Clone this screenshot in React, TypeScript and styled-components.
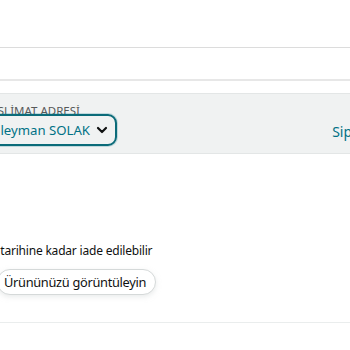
import React from 'react';
import styled, { createGlobalStyle } from 'styled-components';

const teal = '#007185';
const ink = '#0f1111';
const font = "'Noto Sans', 'Open Sans', Arial, sans-serif";

const GlobalStyle = createGlobalStyle`
  html, body {
    margin: 0;
    padding: 0;
    background: #ffffff;
  }
  body {
    font-family: ${font};
    color: ${ink};
  }
`;

const Page = styled.div`
  width: 350px;
  height: 350px;
  overflow: hidden;
  display: flex;
  flex-direction: column;
`;

const Rule = styled.div<{ $top: number; $color: string; $h?: number }>`
  margin-top: ${(p) => p.$top}px;
  height: ${(p) => p.$h || 1}px;
  background: ${(p) => p.$color};
  flex-shrink: 0;
`;

const AddressBar = styled.div`
  margin-top: 12px;
  height: 61px;
  background: #f0f2f2;
  border-top: 1px solid #e3e6e6;
  border-bottom: 1px solid #e3e6e6;
  display: flex;
  align-items: flex-start;
  justify-content: space-between;
  box-sizing: border-box;
  flex-shrink: 0;
`;

const AddressGroup = styled.div`
  margin-left: -17px;
  padding-top: 11px;
  display: flex;
  flex-direction: column;
  align-items: flex-start;
`;

const Label = styled.span`
  font-size: 11.5px;
  line-height: 12px;
  color: #565959;
  padding-left: 2px;
`;

const NameBox = styled.div`
  margin-top: -3px;
  display: inline-flex;
  align-items: center;
  gap: 6px;
  height: 32px;
  box-sizing: border-box;
  padding: 0 7px 0 0;
  border: 2px solid #0b6b79;
  border-radius: 9px;
  box-shadow: 0 0 0 1px rgba(0, 113, 133, 0.2);
`;

const Name = styled.span`
  color: ${teal};
  font-size: 13.2px;
  line-height: 20px;
`;

const OrderLink = styled.span`
  color: ${teal};
  font-size: 14px;
  padding-top: 28px;
  margin-right: -26px;
  white-space: nowrap;
`;

const Body = styled.div`
  margin-top: 88px;
  margin-left: -45px;
  display: flex;
  flex-direction: column;
  align-items: flex-start;
`;

const ReturnText = styled.span`
  font-size: 12px;
  letter-spacing: -0.2px;
  line-height: 18px;
  color: ${ink};
`;

const PillButton = styled.button`
  margin-top: 9px;
  margin-left: 42px;
  height: 26px;
  padding: 0 9px 0 6px;
  border: 1px solid #d5d9d9;
  border-radius: 13px;
  background: #ffffff;
  box-shadow: 0 2px 5px rgba(213, 217, 217, 0.5);
  font-family: ${font};
  font-size: 12.8px;
  letter-spacing: -0.3px;
  color: ${ink};
  white-space: nowrap;
`;

const Chevron = () => (
  <svg width="12" height="12" viewBox="0 0 12 12" aria-hidden="true">
    <path d="M2 4l4 4 4-4" fill="none" stroke="#0f1111" strokeWidth="2.2" strokeLinecap="round" strokeLinejoin="round" />
  </svg>
);

const App: React.FC = () => {
  return (
    <>
      <GlobalStyle />
      <Page>
        <Rule $top={47} $color="#dcdcdc" />
        <Rule $top={31} $color="#e7e7e7" $h={2} />
        <AddressBar>
          <AddressGroup>
            <Label>TESLİMAT ADRESİ</Label>
            <NameBox>
              <Name>Süleyman SOLAK</Name>
              <Chevron />
            </NameBox>
          </AddressGroup>
          <OrderLink>Sipariş</OrderLink>
        </AddressBar>
        <Body>
          <ReturnText>17 Mart tarihine kadar iade edilebilir</ReturnText>
          <PillButton>Ürününüzü görüntüleyin</PillButton>
        </Body>
        <Rule $top={27} $color="#eaeded" />
      </Page>
    </>
  );
};

export default App;
